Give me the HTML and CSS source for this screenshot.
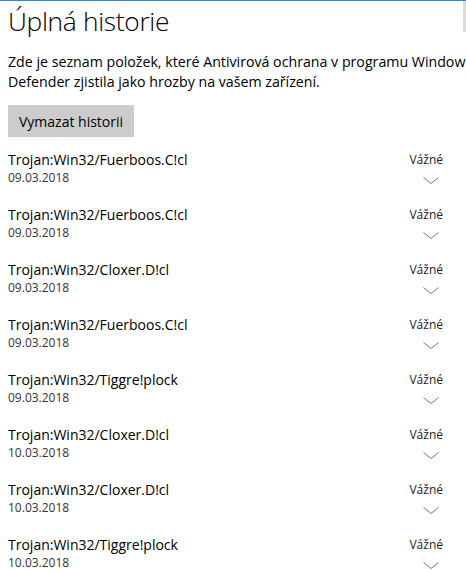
FILE: index.html
```html
<!DOCTYPE html>
<html lang="cs">
<head>
<meta charset="utf-8">
<link rel="stylesheet" href="styles.css">
</head>
<body>
<div class="scroll-thumb"></div>
<main class="page">
  <h1 class="title">Úplná historie</h1>
  <p class="intro">Zde je seznam položek, které Antivirová ochrana v programu Windows Defender zjistila jako hrozby na vašem zařízení.</p>
  <button class="btn">Vymazat historii</button>
  <ul class="list">
    <li class="item"><div class="info"><div class="name">Trojan:Win32/Fuerboos.C!cl</div><div class="date">09.03.2018</div></div><div class="side"><span class="sev">Vážné</span><svg class="chev" width="16" height="7" viewBox="0 0 16 7"><polyline points="0.5,0.5 8,6.5 15.5,0.5"/></svg></div></li>
    <li class="item"><div class="info"><div class="name">Trojan:Win32/Fuerboos.C!cl</div><div class="date">09.03.2018</div></div><div class="side"><span class="sev">Vážné</span><svg class="chev" width="16" height="7" viewBox="0 0 16 7"><polyline points="0.5,0.5 8,6.5 15.5,0.5"/></svg></div></li>
    <li class="item"><div class="info"><div class="name">Trojan:Win32/Cloxer.D!cl</div><div class="date">09.03.2018</div></div><div class="side"><span class="sev">Vážné</span><svg class="chev" width="16" height="7" viewBox="0 0 16 7"><polyline points="0.5,0.5 8,6.5 15.5,0.5"/></svg></div></li>
    <li class="item"><div class="info"><div class="name">Trojan:Win32/Fuerboos.C!cl</div><div class="date">09.03.2018</div></div><div class="side"><span class="sev">Vážné</span><svg class="chev" width="16" height="7" viewBox="0 0 16 7"><polyline points="0.5,0.5 8,6.5 15.5,0.5"/></svg></div></li>
    <li class="item"><div class="info"><div class="name">Trojan:Win32/Tiggre!plock</div><div class="date">09.03.2018</div></div><div class="side"><span class="sev">Vážné</span><svg class="chev" width="16" height="7" viewBox="0 0 16 7"><polyline points="0.5,0.5 8,6.5 15.5,0.5"/></svg></div></li>
    <li class="item"><div class="info"><div class="name">Trojan:Win32/Cloxer.D!cl</div><div class="date">10.03.2018</div></div><div class="side"><span class="sev">Vážné</span><svg class="chev" width="16" height="7" viewBox="0 0 16 7"><polyline points="0.5,0.5 8,6.5 15.5,0.5"/></svg></div></li>
    <li class="item"><div class="info"><div class="name">Trojan:Win32/Cloxer.D!cl</div><div class="date">10.03.2018</div></div><div class="side"><span class="sev">Vážné</span><svg class="chev" width="16" height="7" viewBox="0 0 16 7"><polyline points="0.5,0.5 8,6.5 15.5,0.5"/></svg></div></li>
    <li class="item"><div class="info"><div class="name">Trojan:Win32/Tiggre!plock</div><div class="date">10.03.2018</div></div><div class="side"><span class="sev">Vážné</span><svg class="chev" width="16" height="7" viewBox="0 0 16 7"><polyline points="0.5,0.5 8,6.5 15.5,0.5"/></svg></div></li>
  </ul>
</main>
</body>
</html>
```
FILE: styles.css
```css
html, body {
  margin: 0;
  padding: 0;
  background: #fff;
  overflow: hidden;
}
body {
  border-top: 1px solid #2b88d8;
  font-family: "Open Sans", "Noto Sans", sans-serif;
  color: #000;
  width: 466px;
  height: 571px;
  position: relative;
}
.scroll-thumb {
  position: absolute;
  top: 0;
  right: 0;
  width: 3px;
  height: 31px;
  background: #dcdcdc;
}
.page {
  padding-left: 8px;
  white-space: nowrap;
}
.title {
  margin: 0;
  font-size: 26.3px;
  font-weight: 300;
  line-height: 40px;
  letter-spacing: -0.3px;
}
.intro {
  margin: 11px 0 0;
  font-size: 14.2px;
  line-height: 20px;
  white-space: normal;
  width: 490px;
}
.btn {
  display: block;
  margin-top: 13px;
  border: 0;
  background: #cccccc;
  font-family: inherit;
  font-size: 14px;
  color: #000;
  height: 32px;
  padding: 0 11px;
}
.list {
  list-style: none;
  margin: 13px 0 0;
  padding: 0;
}
.item {
  display: flex;
  justify-content: space-between;
  height: 55px;
  padding-right: 23px;
}
.name {
  font-size: 14px;
  line-height: 20px;
}
.date {
  font-size: 12px;
  line-height: 16px;
  color: #333;
}
.side {
  display: flex;
  flex-direction: column;
  align-items: flex-end;
}
.sev {
  font-size: 12px;
  line-height: 20px;
  color: #222;
}
.chev {
  margin-top: 7px;
  margin-right: 4px;
  fill: none;
  stroke: #777;
  stroke-width: 1;
}
```
